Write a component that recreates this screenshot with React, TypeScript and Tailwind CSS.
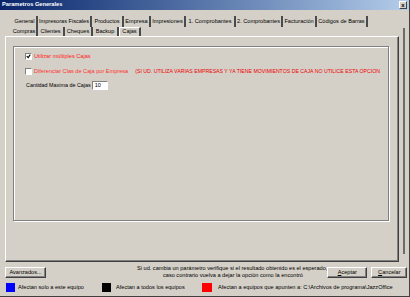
// Parametros Generales - ventana de configuración (pestaña Cajas)

const tabsRow1 = [
  { label: "General", w: 25 },
  { label: "Impresoras Fiscales", w: 54 },
  { label: "Productos", w: 32 },
  { label: "Empresa", w: 27 },
  { label: "Impresiones", w: 35 },
  { label: "1. Comprobantes", w: 50 },
  { label: "2. Comprobantes", w: 47 },
  { label: "Facturación", w: 34 },
  { label: "Códigos de Barras", w: 51 },
]

const tabsRow2 = [
  { label: "Compras", w: 26 },
  { label: "Clientes", w: 27 },
  { label: "Cheques", w: 28 },
  { label: "Backup", w: 26 },
]

function Tab({ label, w }: { label: string; w: number }) {
  return (
    <div
      className="h-full flex items-center justify-center border-r-2 border-[#4a4a4a] text-black whitespace-nowrap"
      style={{ width: w }}
    >
      {label}
    </div>
  )
}

function Checkbox({ checked }: { checked?: boolean }) {
  return (
    <div className="w-[7px] h-[7px] bg-white border-t border-l border-[#808080] border-b border-r border-b-white border-r-white flex items-center justify-center shrink-0">
      {checked && (
        <svg width="5" height="5" viewBox="0 0 7 7">
          <path d="M1 3 L3 5 L6 1" stroke="#000" strokeWidth="1.6" fill="none" />
        </svg>
      )}
    </div>
  )
}

function Btn({ children, w }: { children: React.ReactNode; w: string }) {
  return (
    <div
      className={`${w} h-[11px] flex items-center justify-center bg-[#d4d0c8] border-t border-l border-white border-b border-r border-b-[#404040] border-r-[#404040] shadow-[inset_-1px_-1px_#808080]`}
    >
      {children}
    </div>
  )
}

export default function App() {
  return (
    <div className="w-[410px] h-[297px] bg-[#d4d0c8] flex flex-col overflow-hidden border-b border-r border-[#404040] font-['Liberation_Sans',Arial,sans-serif] text-[5.6px] leading-none text-black">
      {/* ========================================
          BARRA DE TÍTULO
          ======================================== */}
      <div className="h-[10px] flex items-center justify-between pl-[2px] pr-[2px] bg-linear-to-r from-[#0a246a] to-[#b4cdea]">
        <span className="text-white font-bold text-[5.7px]">Parametros Generales</span>
        <div className="w-[8px] h-[8px] bg-[#d4d0c8] border-t border-l border-white border-b border-r border-b-[#404040] border-r-[#404040] flex items-center justify-center text-[6px] font-bold">
          x
        </div>
      </div>

      {/* ========================================
          PESTAÑAS Y PÁGINA
          ======================================== */}
      <div className="flex mt-[5px]">
        <div className="flex flex-col pl-[5px] w-[399px]">
          <div className="h-[12px] flex pl-[8px] pt-[1px]">
            {tabsRow1.map((t) => (
              <Tab key={t.label} {...t} />
            ))}
          </div>
          <div className="h-[9px] flex pl-[7px]">
            {tabsRow2.map((t) => (
              <Tab key={t.label} {...t} />
            ))}
            <div className="w-[22px] h-full flex items-center justify-center border-l border-t border-white border-r-2 border-r-[#4a4a4a]">
              Cajas
            </div>
          </div>

          {/* Página "Cajas" */}
          <div className="w-[394px] h-[226px] border-l border-t border-white border-r border-b border-r-[#404040] border-b-[#404040] shadow-[inset_-1px_-1px_#808080] pt-[9px] pl-[7px]">
            <div className="w-[376px] h-[175px] border border-[#808080] shadow-[inset_1px_1px_#fff,1px_1px_#fff] pt-[6px] pl-[11px] flex flex-col">
              <div className="h-[7px] flex items-center gap-[2px]">
                <Checkbox checked />
                <span className="text-[#ff1a1a]">Utilizar múltiples Cajas</span>
              </div>
              <div className="h-[7px] mt-[8px] flex items-center gap-[2px]">
                <Checkbox />
                <span className="text-[#ff3030] whitespace-nowrap">Diferenciar Clas de Caja por Empresa</span>
                <span className="text-[#ee0000] ml-[5px] whitespace-nowrap text-[5.2px]">
                  (SI UD. UTILIZA VARIAS EMPRESAS Y YA TIENE MOVIMIENTOS DE CAJA NO UTILICE ESTA OPCION
                </span>
              </div>
              <div className="h-[9px] mt-[6px] flex items-center gap-[1px] pl-[1px] whitespace-nowrap">
                <span className="text-[5.4px]">Cantidad Maxima de Cajas</span>
                <div className="w-[16px] h-[9px] shrink-0 bg-white border-t border-l border-[#808080] border-b border-r border-b-white border-r-white flex items-center pl-[2px]">
                  10
                </div>
              </div>
            </div>
          </div>
        </div>
        <div className="ml-[4px] mt-[13px] w-[2px] h-[226px] bg-[#6b6b6b]" />
      </div>

      {/* ========================================
          BOTONES Y AVISO
          ======================================== */}
      <div className="h-[16px] mt-[1px] flex items-start pl-[5px]">
        <div className="mt-[4px]">
          <Btn w="w-[41px]">Avanzados...</Btn>
        </div>
        <div className="ml-[91px] mt-[2px] flex flex-col leading-[7px] whitespace-nowrap">
          <span>Si ud. cambia un parámetro verifique si el resultado obtenido es el esperado,</span>
          <span className="ml-[26px]">caso contrario vuelva a dejar la opción como la encontró</span>
        </div>
        <div className="ml-auto mt-[4px] flex gap-[4px] pr-[2px]">
          <Btn w="w-[40px]">
            <span>
              <u>A</u>ceptar
            </span>
          </Btn>
          <Btn w="w-[36px]">
            <span>
              <u>C</u>ancelar
            </span>
          </Btn>
        </div>
      </div>

      {/* Leyenda de colores */}
      <div className="h-[9px] mt-[4px] flex items-center pl-[6px] whitespace-nowrap">
        <div className="w-[96px] flex items-center gap-[3px]">
          <div className="w-[9px] h-[9px] bg-[#0000ff]" />
          <span>Afectan solo a este equipo</span>
        </div>
        <div className="w-[100px] flex items-center gap-[5px]">
          <div className="w-[9px] h-[9px] bg-black" />
          <span>Afectan a todos los equipos</span>
        </div>
        <div className="flex items-center gap-[6px]">
          <div className="w-[10px] h-[9px] bg-[#ff0000]" />
          <span>Afectan a equipos que apunten a: C:\Archivos de programa\JazzOffice</span>
        </div>
      </div>
    </div>
  )
}
